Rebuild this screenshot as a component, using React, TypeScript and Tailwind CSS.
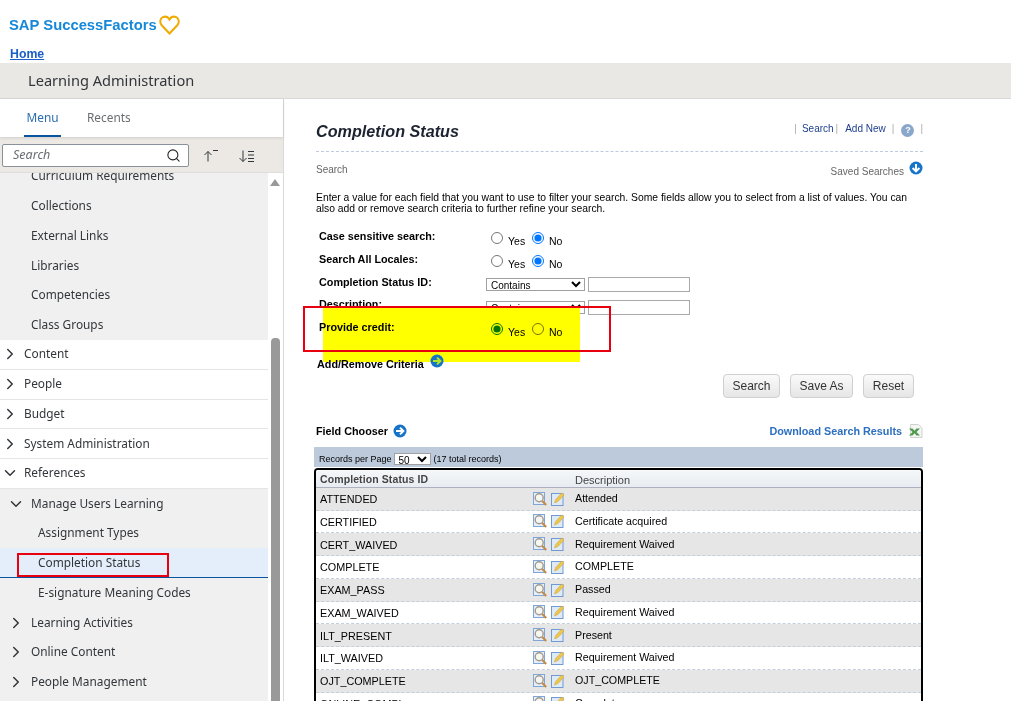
import { ChevronDown, ChevronRight, Search } from 'lucide-react';

const subTop = ['Curriculum Requirements', 'Collections', 'External Links', 'Libraries', 'Competencies', 'Class Groups'];
const topLevel = ['Content', 'People', 'Budget', 'System Administration'];
const bottomLevel = ['Learning Activities', 'Online Content', 'People Management'];

const records = [
  ['ATTENDED', 'Attended'],
  ['CERTIFIED', 'Certificate acquired'],
  ['CERT_WAIVED', 'Requirement Waived'],
  ['COMPLETE', 'COMPLETE'],
  ['EXAM_PASS', 'Passed'],
  ['EXAM_WAIVED', 'Requirement Waived'],
  ['ILT_PRESENT', 'Present'],
  ['ILT_WAIVED', 'Requirement Waived'],
  ['OJT_COMPLETE', 'OJT_COMPLETE'],
  ['ONLINE_COMPL', 'Complete'],
];

const CircleArrow = ({ dir, green }: { dir: 'down' | 'right'; green?: boolean }) => (
  <svg width="14" height="14" viewBox="0 0 14 14" className="shrink-0">
    <circle cx="7" cy="7" r="6.5" fill="#1573c9" />
    <g transform={dir === 'down' ? 'rotate(90 7 7)' : undefined}>
      <path d="M3 7h7M7 3.600 10.400 7 7 10.400" fill="none" stroke={green ? '#b5e61d' : '#fff'} strokeWidth="2" />
    </g>
  </svg>
);

const ViewIcon = () => (
  <svg width="14" height="14" viewBox="0 0 14 14" className="shrink-0">
    <rect x="0.5" y="0.5" width="11" height="12" fill="#e6eff9" stroke="#7fa6d6" />
    <circle cx="6.200" cy="5.800" r="4" fill="#f7f7f2" stroke="#a09a8c" strokeWidth="1.400" />
    <path d="m9.200 9 4 4" stroke="#c08a4a" strokeWidth="2" />
  </svg>
);

const EditIcon = () => (
  <svg width="14" height="14" viewBox="0 0 14 14" className="shrink-0">
    <rect x="0.5" y="1.5" width="11.5" height="12" fill="#dfeaf7" stroke="#6f9ad2" />
    <path d="m3.500 11 1.200-3.600 6-6.400 2.300 2-6 6.500z" fill="#eec64e" stroke="#d0ac40" strokeWidth="0.6" />
  </svg>
);

const ExcelIcon = () => (
  <svg width="14" height="14" viewBox="0 0 14 14" className="shrink-0">
    <path d="M1.500.5h8l3.500 3.500v9.500h-11.500z" fill="#f5f6f4" stroke="#cfd3cf" />
    <path d="M0 4.500h3.500l2 2.200 2-2.200h3.500l-3.500 3.500 3.500 3.500h-3.500l-2-2.200-2 2.200h-3.500l3.500-3.500z" fill="#4f9a4f" />
  </svg>
);

const Chevron = ({ open }: { open?: boolean }) =>
  open ? (
    <ChevronDown size={18} strokeWidth={2} className="text-[#32363a] shrink-0" />
  ) : (
    <ChevronRight size={18} strokeWidth={2} className="text-[#32363a] shrink-0" />
  );

const MenuRow = ({ label, open }: { label: string; open?: boolean }) => (
  <div className="h-[29.75px] shrink-0 flex items-center bg-white border-b border-[#e5e5e5] pl-px">
    <Chevron open={open} />
    <span className="ml-[5px]">{label}</span>
  </div>
);

const SubRow = ({ label, indent }: { label: string; indent: string }) => (
  <div className={`h-[29.75px] shrink-0 flex items-center ${indent}`}>{label}</div>
);

const NestedRow = ({ label, open }: { label: string; open?: boolean }) => (
  <div className="h-[29.75px] shrink-0 flex items-center pl-[7px]">
    <Chevron open={open} />
    <span className="ml-[6px]">{label}</span>
  </div>
);

const Sidebar = () => (
  <aside className="w-[284px] shrink-0 border-r border-[#d9d9d9] flex flex-col font-['Noto_Sans',sans-serif] text-[11.85px] text-[#32363a] min-h-0">
    <div className="h-[38px] shrink-0 flex pl-[24px] gap-[26px] shadow-[0_1px_3px_rgba(0,0,0,0.12)] relative">
      <div className="w-[37px] pt-px flex items-center justify-center border-b-2 border-[#0854a0] text-[#2a6cb0]">Menu</div>
      <div className="flex items-center text-[#6a6d70]">Recents</div>
    </div>
    <div className="h-[36px] shrink-0 bg-[#ece9e5] border-b border-[#dedede] flex items-center pl-[2px]">
      <div className="w-[187px] h-[23px] mt-[2px] bg-white border border-[#89919a] rounded-[2px] flex items-center justify-between pl-[10px] pr-[7px]">
        <span className="italic text-[#6a6d70] text-[12.5px]">Search</span>
        <Search size={15} strokeWidth={1.7} className="text-[#222]" />
      </div>
      <svg width="18" height="14" viewBox="0 0 18 14" className="ml-[13px] mt-[2px]" fill="none" stroke="#32363a" strokeWidth="1">
        <path d="M6 12.500V2.500M2.500 6 6 2.500 9.500 6M11 1.500h5" />
      </svg>
      <svg width="18" height="14" viewBox="0 0 18 14" className="ml-[18px] mt-[2px]" fill="none" stroke="#32363a" strokeWidth="1">
        <path d="M5 1.500v11M1.500 9 5 12.500 8.500 9M10 2.500h6M10 6h6M10 9.500h6M10 12.500h6" />
      </svg>
    </div>
    <div className="flex-1 min-h-0 overflow-hidden flex relative">
      <div className="w-[268px] shrink-0 flex flex-col -mt-[11.5px]">
        <div className="bg-[#f0f0f0] flex flex-col">
          {subTop.map((s) => (
            <SubRow key={s} label={s} indent="pl-[31px]" />
          ))}
        </div>
        {topLevel.map((s) => (
          <MenuRow key={s} label={s} />
        ))}
        <MenuRow label="References" open />
        <div className="bg-[#f0f0f0] flex flex-col flex-1">
          <NestedRow label="Manage Users Learning" open />
          <SubRow label="Assignment Types" indent="pl-[38px]" />
          <div className="h-[29.75px] shrink-0 flex items-center pl-[38px] bg-[#e3eefa] border-b-[1.5px] border-[#0854a0]">
            Completion Status
          </div>
          <SubRow label="E-signature Meaning Codes" indent="pl-[38px]" />
          {bottomLevel.map((s) => (
            <NestedRow key={s} label={s} />
          ))}
        </div>
      </div>
      <div className="flex-1 flex flex-col items-center pt-[6px] pr-[1px]">
        <div className="w-0 h-0 border-l-[5px] border-r-[5px] border-b-[7px] border-l-transparent border-r-transparent border-b-[#999]" />
        <div className="w-[9px] flex-1 mt-[152px] bg-[#999] rounded-t-[4px]" />
      </div>
      <div className="absolute left-[17px] top-[380px] w-[152px] h-[24px] border-2 border-[#e8000f]" />
    </div>
  </aside>
);

const FormRow = ({ label, children }: { label: string; children: React.ReactNode }) => (
  <div className="relative h-[22.75px] flex items-start">
    <div className="w-[170px] pl-[3px] pt-[4px] font-bold text-[10.8px] text-black">{label}</div>
    {children}
  </div>
);

const RadioPair = ({ name, yes, blend }: { name: string; yes?: boolean; blend?: boolean }) => (
  <div className="flex items-start pt-[8px] pl-[5px] text-[10.5px] leading-[12px] text-black">
    <input type="radio" name={name} defaultChecked={yes} className={`w-[12px] h-[12px] m-0 ${blend ? 'mix-blend-multiply' : ''}`} />
    <span className="ml-[5px] mt-[3px] w-[24px]">Yes</span>
    <input type="radio" name={name} defaultChecked={!yes} className={`w-[12px] h-[12px] m-0 ${blend ? 'mix-blend-multiply' : ''}`} />
    <span className="ml-[5px] mt-[3px]">No</span>
  </div>
);

const FilterInputs = () => (
  <div className="flex items-center pt-[7.5px] gap-[3px]">
    <select className="w-[99px] h-[13px] border border-[#a0a0a0] bg-white text-[10px] leading-none text-black">
      <option>Contains</option>
    </select>
    <input className="w-[102px] h-[15px] border border-[#a9a9a9] bg-white" />
  </div>
);

const ActionButton = ({ label, width }: { label: string; width: string }) => (
  <button className={`${width} h-[24px] rounded-[4px] border border-[#d0d0d0] bg-gradient-to-b from-[#fafafa] to-[#e6e6e6] text-[12px] text-[#333]`}>
    {label}
  </button>
);

const RecordsTable = () => (
  <div className="border-2 border-b-0 border-black rounded-t-[4px] overflow-hidden mt-[1px]">
    <div className="h-[18px] flex items-center pt-[3px] bg-gradient-to-b from-[#f5f7f9] to-[#e8ecf1] border-b border-[#aeb0bf] text-[10.5px] font-bold text-[#444]">
      <div className="w-[259px] pl-[4px] tracking-[0.1px]">Completion Status ID</div>
      <div className="w-[260px] font-normal text-[11px]">Description</div>
    </div>
    {records.map(([id, desc], i) => (
      <div
        key={id}
        className={`h-[22.75px] flex items-center border-b border-dashed border-[#c3cfdc] text-[10.7px] text-black ${i % 2 === 0 ? 'bg-[#e6e6e6]' : 'bg-white'}`}
      >
        <div className="w-[217px] pl-[4px] pt-[1px] text-[10.8px]">{id}</div>
        <ViewIcon />
        <div className="w-[4px]" />
        <EditIcon />
        <div className="ml-[10px] pb-[1px]">{desc}</div>
      </div>
    ))}
  </div>
);

const Main = () => (
  <main className="flex-1 min-w-0 overflow-hidden pl-[30px] font-['Liberation_Sans',Arial,sans-serif]">
    <div className="w-[609px] pl-[2px]">
      <div className="h-[53px] flex justify-between border-b border-dashed border-[#bccbdc] pt-[22px]">
        <h1 className="text-[16.2px] leading-[20px] font-bold italic text-[#1d2330]">Completion Status</h1>
        <div className="flex items-start text-[10px] text-[#1f3f8f]">
          <span className="text-[#aaa] mr-[5px]">|</span>
          <span>Search</span>
          <span className="text-[#aaa] mx-[2px]">|</span>
          <span className="ml-[5px]">Add New</span>
          <span className="text-[#aaa] ml-[6px] mr-[7px]">|</span>
          <span className="w-[13px] h-[13px] mt-[3px] rounded-full bg-[#8aa7cc] text-white text-[9px] font-bold flex items-center justify-center">?</span>
          <span className="text-[#aaa] ml-[6px]">|</span>
        </div>
      </div>
      <div className="h-[28px] flex justify-between text-[10px] text-[#666]">
        <span className="pt-[10px]">Search</span>
        <span className="flex items-start pt-[9px] gap-[5px]">
          <span className="pt-[3px]">Saved Searches</span>
          <CircleArrow dir="down" />
        </span>
      </div>
      <p className="mt-[12px] text-[10.35px] leading-[11px] text-black w-[600px]">
        Enter a value for each field that you want to use to filter your search. Some fields allow you to select from a list of values. You can also add or remove search criteria to further refine your search.
      </p>
      <div className="relative mt-[10px]">
        <FormRow label="Case sensitive search:">
          <RadioPair name="case" />
        </FormRow>
        <FormRow label="Search All Locales:">
          <RadioPair name="locales" />
        </FormRow>
        <FormRow label="Completion Status ID:">
          <FilterInputs />
        </FormRow>
        <FormRow label="Description:">
          <FilterInputs />
        </FormRow>
        <div className="absolute left-[7px] top-[83px] w-[257px] h-[55px] bg-[#ffff00]" />
        <FormRow label="Provide credit:">
          <RadioPair name="credit" yes blend />
        </FormRow>
        <div className="relative h-[14px] mt-[19px] flex items-center gap-[6px] font-bold text-[10.8px] text-black pl-[1px]">
          Add/Remove Criteria
          <span className="mb-[6px]">
            <CircleArrow dir="right" green />
          </span>
        </div>
        <div className="absolute left-[-13px] top-[82px] w-[308px] h-[46px] border-2 border-[#e8000f]" />
      </div>
      <div className="flex justify-end gap-[10px] pr-[9px] mt-[3px]">
        <ActionButton label="Search" width="w-[57px]" />
        <ActionButton label="Save As" width="w-[63px]" />
        <ActionButton label="Reset" width="w-[51px]" />
      </div>
      <div className="flex items-center justify-between mt-[26px] h-[14px] font-bold text-[10.8px]">
        <span className="flex items-center gap-[5px] text-black">
          Field Chooser
          <CircleArrow dir="right" />
        </span>
        <span className="flex items-center gap-[7px] text-[#2d6fc0]">
          Download Search Results
          <ExcelIcon />
        </span>
      </div>
    </div>
    <div className="w-[609px] mt-[9px]">
      <div className="h-[20px] bg-[#bccadb] flex items-center pl-[5px] text-[9px] text-black pt-[5px]">
        Records per Page
        <select className="w-[37px] h-[12px] ml-[2px] mr-[3px] border border-[#a0a0a0] bg-white text-[10px] leading-none">
          <option>50</option>
        </select>
        (17 total records)
      </div>
      <RecordsTable />
    </div>
  </main>
);

export default function App() {
  return (
    <div className="w-[1011px] h-[701px] overflow-hidden flex flex-col bg-white">
      <header className="h-[63px] shrink-0 pl-[9px] pt-[14px]">
        <div className="flex items-center h-[22px]">
          <span className="font-['Liberation_Sans',Arial,sans-serif] font-bold text-[14.8px] leading-none text-[#1788d8]">SAP SuccessFactors</span>
          <svg width="21" height="20" viewBox="0 0 21 20" className="ml-[2px]" fill="none" stroke="#f0ab00" strokeWidth="2">
            <path d="M10.500 18.500 2.500 10C.5 7.500 1 3.500 3.800 2.200c2.600-1.200 5.200-.2 6.700 2.300 1.500-2.500 4.100-3.500 6.700-2.300C20 3.500 20.500 7.500 18.500 10z" />
          </svg>
        </div>
        <a className="block mt-[11px] pl-[1px] font-['Liberation_Sans',Arial,sans-serif] font-bold text-[12.3px] leading-[14px] underline text-[#1a5fc8]">Home</a>
      </header>
      <div className="h-[36px] shrink-0 bg-[#eae8e4] border-b border-[#d9d9d9] pl-[28px] flex items-center font-['Noto_Sans',sans-serif] text-[14.6px] text-[#32363a]">
        Learning Administration
      </div>
      <div className="flex-1 min-h-0 flex">
        <Sidebar />
        <Main />
      </div>
    </div>
  );
}
